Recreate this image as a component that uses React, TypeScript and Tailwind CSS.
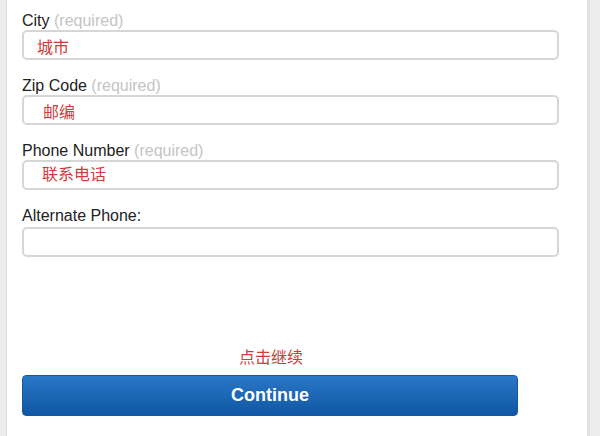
import React from "react";

const fields = [
  { label: "City", req: true, note: "城市", pl: "pl-[13px]", pt: "pt-[3px]" },
  { label: "Zip Code", req: true, note: "邮编", pl: "pl-[19px]", pt: "pt-[3px]" },
  { label: "Phone Number", req: true, note: "联系电话", pl: "pl-[18px]", pt: "pt-0" },
  { label: "Alternate Phone:", req: false, note: "", pl: "", pt: "" },
];

export default function App() {
  return (
    <div
      className="w-[600px] h-[436px] bg-[#ededed] flex overflow-hidden"
      style={{ fontFamily: '"Liberation Sans", Arial, "Noto Sans CJK SC", sans-serif' }}
    >
      <div className="w-[6px] shrink-0 bg-[#ececec]" />
      <div className="w-[584px] shrink-0 bg-white border-l border-r-[3px] border-l-[#dcdcdc] border-r-[#e2e2e2] pl-[15px] pt-[10px]">
        {fields.map((f, i) => (
          <div key={i} className={i === 3 ? "mb-0" : "mb-[15px]"}>
            <div className="h-[20px] leading-[22px] text-[16px] text-[#222]">
              {f.label}
              {f.req && <span className="text-[#c4c4c4]"> (required)</span>}
            </div>
            <div
              className={`w-[537px] h-[30px] border-2 border-[#d6d6d6] rounded-[5px] bg-white flex items-start ${f.pl} ${f.pt} ${i === 3 ? "mt-[2px]" : ""}`}
            >
              {f.note && (
                <span className="text-[16px] leading-[22px] text-[#d03a3a] font-normal" style={{ fontFamily: '"Noto Sans CJK SC", sans-serif' }}>
                  {f.note}
                </span>
              )}
            </div>
          </div>
        ))}
        <div className="w-[496px] mt-[88px] text-center text-[16px] leading-[22px] text-[#d03a3a] font-normal pl-[2px]" style={{ fontFamily: '"Noto Sans CJK SC", sans-serif' }}>
          点击继续
        </div>
        <button className="mt-[8px] w-[496px] h-[41px] rounded-[4px] bg-gradient-to-b from-[#2a78c6] to-[#0f57a5] border border-[#1458a0] text-white font-bold text-[18px] flex items-center justify-center">
          Continue
        </button>
      </div>
      <div className="flex-1 bg-[#ededed]" />
    </div>
  );
}
